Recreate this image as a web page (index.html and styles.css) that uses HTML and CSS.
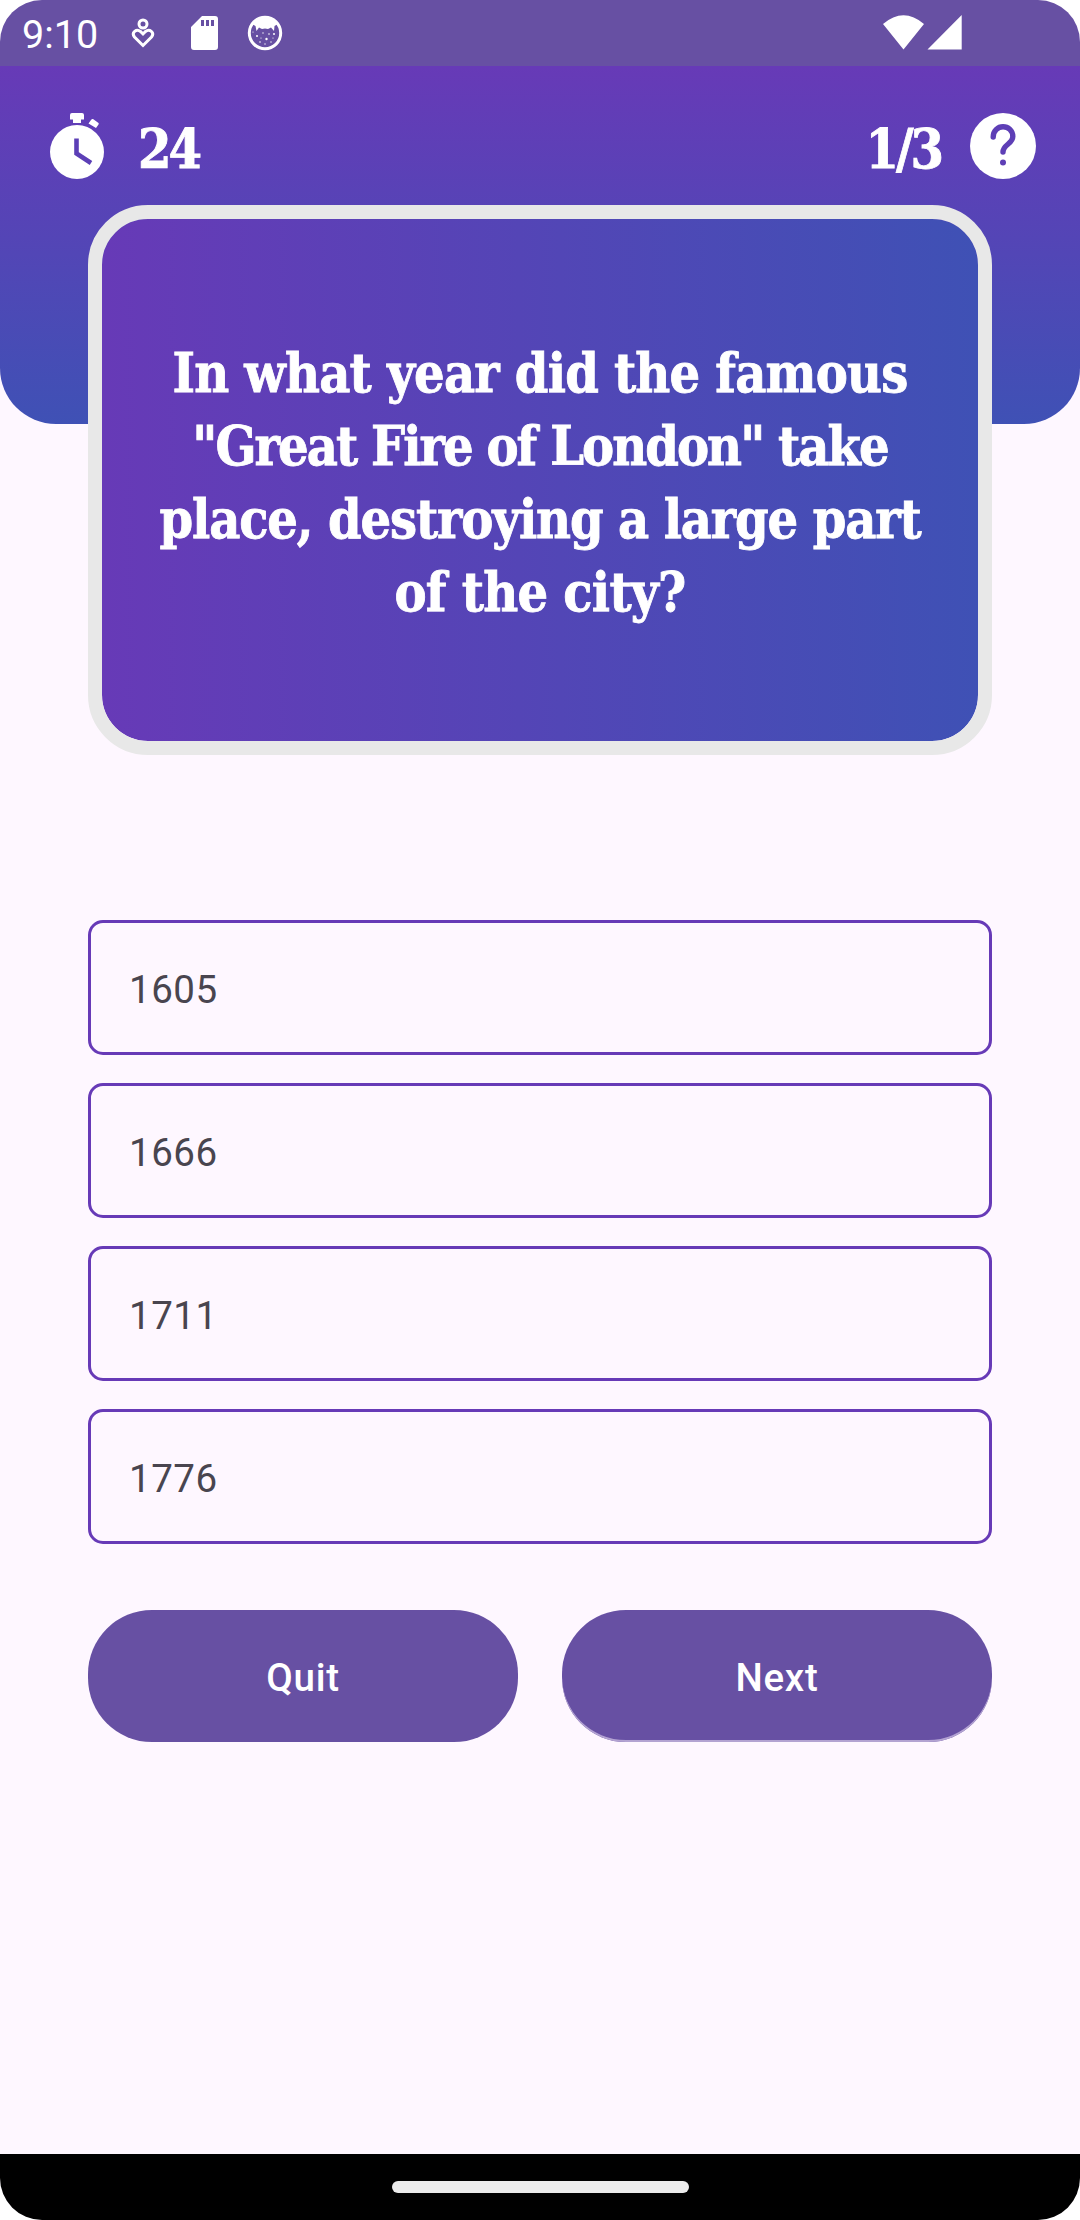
FILE: index.html
```html
<!DOCTYPE html>
<html lang="en">
<head>
<meta charset="utf-8">
<title>Quiz</title>
<link rel="stylesheet" href="styles.css">
</head>
<body>
<main class="screen">
  <div class="status">
    <span class="clock">9:10</span>
    <svg class="icon-heart" width="24" height="34" viewBox="0 0 24 34" fill="none" stroke="#fff" stroke-width="3"><circle cx="12" cy="8" r="4"/><path d="M12 29.500L3.500 21C0 16.500 5.500 12.500 9.500 15.500L12 18L14.500 15.500C18.500 12.500 24 16.500 20.500 21Z"/></svg>
    <svg class="icon-card" width="28" height="36" viewBox="0 0 28 36"><path fill="#fff" fill-rule="evenodd" d="M11 0H24Q27 0 27 3V31Q27 34 24 34H3Q0 34 0 31V11ZM10 4V10H13V4ZM15 4V10H18V4ZM20 4V10H23V4Z"/></svg>
    <svg class="icon-cat" width="36" height="36" viewBox="0 0 36 36"><circle cx="18" cy="18" r="15.700" fill="none" stroke="#fff" stroke-width="3"/><path fill="#fff" d="M5 9Q11 2 18 2T31 9L27.500 11L27 16L24 12.500L21 14L18 13.500L15 14L12 12.500L9.500 16L8.500 11Z"/><g fill="#fff"><circle cx="10" cy="21" r="1"/><circle cx="19.500" cy="24" r="1.200"/><circle cx="27" cy="19" r="1"/><circle cx="16" cy="18" r=".7"/><circle cx="13" cy="27" r=".8"/><circle cx="24" cy="27" r=".7"/><circle cx="22" cy="19" r=".8"/><circle cx="6" cy="17" r=".6"/><circle cx="14" cy="23" r=".6"/><circle cx="26" cy="23" r=".6"/><circle cx="18" cy="29" r=".7"/></g></svg>
    <svg class="icon-signal" width="80" height="36" viewBox="0 0 80 36" fill="#fff"><path d="M0 9Q20.500-8.500 41 9L20.500 34.500ZM44.500 34.500L78.700 0V34.500Z"/></svg>
  </div>
  <header class="header">
    <svg class="icon-timer" width="54" height="68" viewBox="0 0 54 68"><g fill="#fff"><circle cx="27" cy="40" r="27"/><path d="M22 1H32Q34 1 34 3V7.500H31V11H23V7.500H20V3Q20 1 22 1Z"/><path d="M43 7L48.500 11Q49 11.500 48.500 12.500L46 16L38.500 11.500L41 8Q42 6.500 43 7Z"/></g><path d="M26.500 26.500V41.500L41 51" fill="none" stroke="#5c3fb6" stroke-width="4.600"/></svg>
    <span class="slab seconds">24</span>
    <span class="slab progress">1/3</span>
    <svg class="icon-help" width="66" height="67" viewBox="0 -1 66 67"><circle cx="33" cy="33" r="33" fill="#fff"/><path d="M23.200 24C23.200 10.500 42.800 10.500 42.800 23.500C42.800 31 33 31.500 33 39" fill="none" stroke="#5e3fb6" stroke-width="5.400" stroke-linecap="round"/><circle cx="33" cy="49.500" r="3" fill="#5e3fb6"/></svg>
  </header>
  <section class="card">
    <p class="slab question"><span class="line l1">In what year did the famous</span> <span class="line l2">"Great Fire of London" take</span> <span class="line l3">place, destroying a large part</span> <span class="line l4">of the city?</span></p>
  </section>
  <div class="options">
    <div class="option">1605</div>
    <div class="option">1666</div>
    <div class="option">1711</div>
    <div class="option">1776</div>
  </div>
  <div class="actions">
    <button class="btn">Quit</button>
    <button class="btn btn-next">Next</button>
  </div>
  <footer class="navbar"><span class="handle"></span></footer>
</main>
</body>
</html>
```
FILE: styles.css
```css
* { box-sizing: border-box; }
body { margin: 0; background: #fff; font-family: Roboto, sans-serif; }
.screen { width: 1080px; height: 2220px; display: flex; flex-direction: column; background: #fef7ff; border-radius: 42px; overflow: hidden; }
.status { height: 66px; flex: none; display: flex; align-items: flex-start; background: #6750a3; color: #fff; }
.clock { width: 81px; margin-left: 22px; font-size: 39.5px; line-height: 46px; padding-top: 12px; }
.icon-heart { margin: 16px 0 0 28px; }
.icon-card { margin: 16px 0 0 36px; }
.icon-cat { margin: 15px 0 0 28px; }
.icon-signal { margin: 15px 117px 0 auto; }
.header { height: 358px; flex: none; display: flex; align-items: flex-start; padding: 46px 44px 0 50px; background: linear-gradient(#673ab7, #3f51b5); border-radius: 0 0 56px 56px; color: #fff; }
.slab { font-family: "Roboto Slab", "DejaVu Serif Condensed", "DejaVu Serif", serif; font-weight: 700; font-stretch: condensed; font-size: 53.5px; line-height: 73px; color: #fff; -webkit-text-stroke: .8px #fff; }
.seconds { margin: 1px 0 0 34px; letter-spacing: -3px; }
.progress { margin: 1px 29px 0 auto; letter-spacing: -3px; }
.card { height: 550px; flex: none; margin: -219px 88px 0; display: flex; align-items: center; justify-content: center; border: 14px solid #e8e8e8; border-radius: 60px; background: linear-gradient(90deg, #673ab7, #3f51b5) padding-box; }
.question { margin: 0; padding-top: 5px; text-align: center; }
.line { display: block; white-space: nowrap; }
.l1 { letter-spacing: -.8px; }
.l2 { letter-spacing: -1.95px; }
.l3 { letter-spacing: -1.15px; }
.l4 { letter-spacing: -.75px; }
.options { display: flex; flex-direction: column; gap: 28px; margin: 165px 88px 0; }
.option { height: 135px; display: flex; align-items: center; padding: 3px 0 0 38px; border: 3px solid #673ab7; border-radius: 15px; color: #49454f; font-size: 38.5px; letter-spacing: .5px; }
.actions { display: flex; gap: 44px; margin: 66px 88px 0; }
.btn { flex: 1; height: 132px; border: 0; border-radius: 64px; background: #6750a3; color: #fff; font: 500 38.5px Roboto, sans-serif; letter-spacing: .69px; padding: 3px 0 0; }
.btn-next { box-shadow: inset 0 -2px #b3a3d2; }
.navbar { height: 66px; flex: none; margin-top: auto; display: flex; align-items: center; justify-content: center; background: #000; }
.handle { width: 297px; height: 12px; border-radius: 6px; background: #ececec; }
```
